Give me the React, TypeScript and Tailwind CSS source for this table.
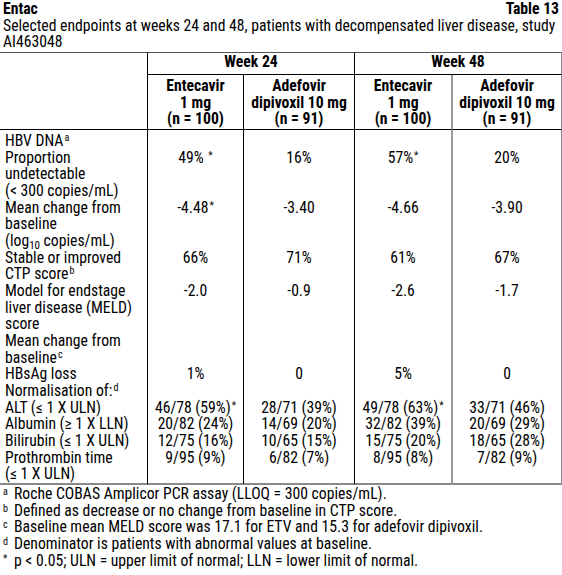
import React from "react";

const Sup: React.FC<{ children: React.ReactNode }> = ({ children }) => (
    <span className="relative -top-[5px] ml-[1px] text-[10px] leading-none">{children}</span>
);

const Star = () => <span className="relative -top-[4px] ml-[1px] text-[10px] leading-none">*</span>;

interface Row {
    label: React.ReactNode;
    cells: React.ReactNode[];
}

const rows: Row[] = [
    { label: <>HBV DNA<Sup>a</Sup></>, cells: [] },
    {
        label: <>Proportion<br />undetectable<br />(&lt; 300 copies/mL)</>,
        cells: [<>49% <Star /></>, "16%", <>57%<Star /></>, "20%"],
    },
    {
        label: (
            <>
                Mean change from<br />baseline<br />(log
                <span className="relative top-[3px] text-[11px] leading-none">10</span> copies/mL)
            </>
        ),
        cells: [<>-4.48<Star /></>, "-3.40", "-4.66", "-3.90"],
    },
    { label: <>Stable or improved<br />CTP score<Sup>b</Sup></>, cells: ["66%", "71%", "61%", "67%"] },
    {
        label: <>Model for endstage<br />liver disease (MELD)<br />score</>,
        cells: ["-2.0", "-0.9", "-2.6", "-1.7"],
    },
    { label: <>Mean change from<br />baseline<Sup>c</Sup></>, cells: [] },
    { label: "HBsAg loss", cells: ["1%", "0", "5%", "0"] },
    { label: <>Normalisation of:<Sup>d</Sup></>, cells: [] },
    { label: "ALT (≤ 1 X ULN)", cells: [<>46/78 (59%)<Star /></>, "28/71 (39%)", <>49/78 (63%)<Star /></>, "33/71 (46%)"] },
    { label: "Albumin (≥ 1 X LLN)", cells: ["20/82 (24%)", "14/69 (20%)", "32/82 (39%)", "20/69 (29%)"] },
    { label: "Bilirubin (≤ 1 X ULN)", cells: ["12/75 (16%)", "10/65 (15%)", "15/75 (20%)", "18/65 (28%)"] },
    { label: <>Prothrombin time<br />(≤ 1 X ULN)</>, cells: ["9/95 (9%)", "6/82 (7%)", "8/95 (8%)", "7/82 (9%)"] },
];

const colBorders = [
    "border-l border-black",
    "border-l border-black",
    "border-l border-black",
    "border-l-2 border-[#9a9a9a] border-r border-r-[#8c8c8c]",
];

const heads = [
    ["Entecavir", "1 mg", "(n = 100)"],
    ["Adefovir", "dipivoxil 10 mg", "(n = 91)"],
    ["Entecavir", "1 mg", "(n = 100)"],
    ["Adefovir", "dipivoxil 10 mg", "(n = 91)"],
];

const footnotes: [string, string][] = [
    ["a", "Roche COBAS Amplicor PCR assay (LLOQ = 300 copies/mL)."],
    ["b", "Defined as decrease or no change from baseline in CTP score."],
    ["c", "Baseline mean MELD score was 17.1 for ETV and 15.3 for adefovir dipivoxil."],
    ["d", "Denominator is patients with abnormal values at baseline."],
    ["*", "p < 0.05; ULN = upper limit of normal; LLN = lower limit of normal."],
];

export default function App() {
    return (
        <div className="w-[562px] h-[575px] overflow-hidden bg-white pt-[1px] text-black font-['Roboto_Condensed','Liberation_Sans',sans-serif] text-[15.7px] leading-[16.67px]">
            <div className="flex justify-between px-[3px] font-bold">
                <span>Entac</span>
                <span>Table 13</span>
            </div>
            <div className="px-[3px] whitespace-nowrap">
                Selected endpoints at weeks 24 and 48, patients with decompensated liver disease, study
                <br />
                AI463048
            </div>
            <table className="mt-[1px] w-[562px] table-fixed border-separate border-spacing-0">
                <colgroup>
                    <col className="w-[147px]" />
                    <col className="w-[96px]" />
                    <col className="w-[111px]" />
                    <col className="w-[97px]" />
                    <col className="w-[111px]" />
                </colgroup>
                <thead className="font-bold">
                    <tr>
                        <th rowSpan={2} className="border-t border-b border-t-[#555] border-b-black" />
                        <th colSpan={2} className="h-[23px] border-t border-b border-l border-t-[#555] border-black pb-[2px] text-center">
                            Week 24
                        </th>
                        <th colSpan={2} className="border-t border-b border-l border-r border-t-[#555] border-black border-r-[#8c8c8c] pb-[2px] text-center">
                            Week 48
                        </th>
                    </tr>
                    <tr>
                        {heads.map((h, i) => (
                            <th key={i} className={`h-[55px] border-b border-b-black pt-[3px] align-top text-center whitespace-nowrap ${colBorders[i]}`}>
                                {h.map((l) => (
                                    <div key={l}>{l}</div>
                                ))}
                            </th>
                        ))}
                    </tr>
                </thead>
                <tbody>
                    {rows.map((r, ri) => {
                        const pad = ri === 0 ? "pt-[3px]" : "";
                        const bottom = ri === rows.length - 1 ? "border-b-2 border-b-[#8a8a8a]" : "";
                        return (
                            <tr key={ri}>
                                <td className={`p-0 pl-[5px] align-top whitespace-nowrap ${pad} ${bottom}`}>{r.label}</td>
                                {[0, 1, 2, 3].map((ci) => (
                                    <td key={ci} className={`p-0 align-top text-center whitespace-nowrap ${pad} ${bottom} ${colBorders[ci]}`}>
                                        {r.cells[ci] ?? ""}
                                    </td>
                                ))}
                            </tr>
                        );
                    })}
                </tbody>
            </table>
            <div className="pt-[1px]">
                {footnotes.map(([k, t]) => (
                    <div key={k} className="flex whitespace-nowrap">
                        <span className="w-[14px] pl-[3px] text-[10px] leading-none relative top-[1px]">{k}</span>
                        <span>{t}</span>
                    </div>
                ))}
            </div>
        </div>
    );
}
